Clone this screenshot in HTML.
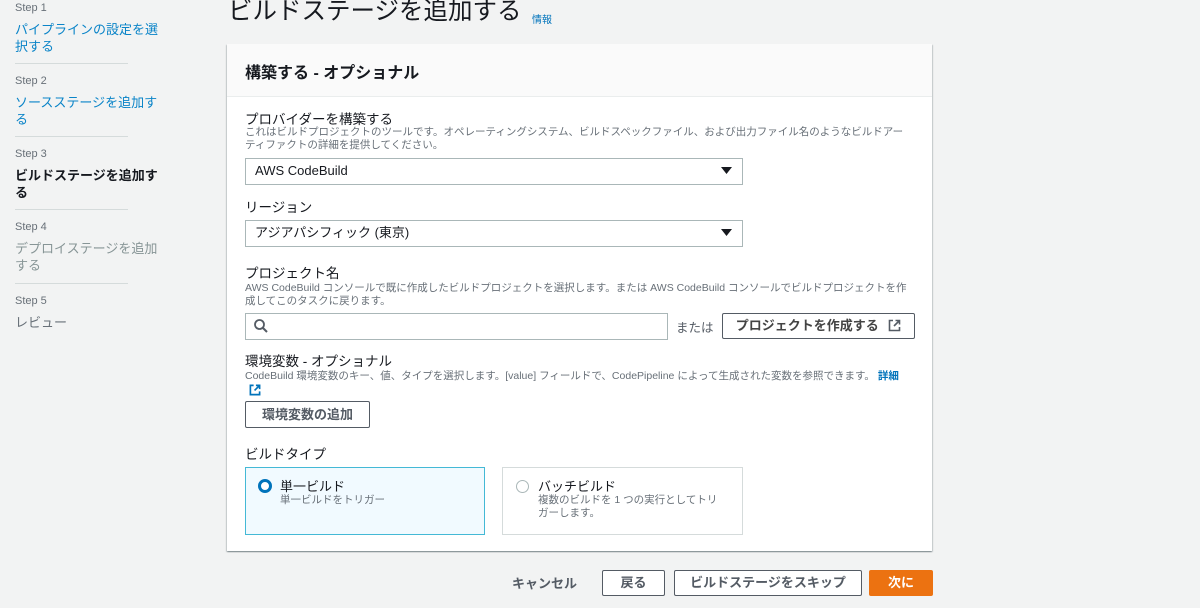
<!DOCTYPE html><html><head><meta charset="utf-8"><style>
body{margin:0;width:1200px;height:608px;background:#f2f3f3;font-family:"Liberation Sans","Noto Sans CJK JP",sans-serif;color:#16191f;position:relative;overflow:hidden}
.a{position:absolute;white-space:nowrap}
.step{font-size:11px;color:#687078}
.lnk{font-size:13px;color:#0a84c8;line-height:17px}
.dv{position:absolute;left:15px;width:113px;height:1px;background:#d5dbdb}
.lbl{font-size:13.5px;color:#16191f}
.desc{font-size:10.5px;color:#687078;line-height:13px}
.box{position:absolute;background:#fff;border:1px solid #aab7b8;box-sizing:border-box}
.btn{position:absolute;background:#fff;border:1px solid #545b64;box-sizing:border-box;border-radius:2px;font-weight:bold;font-size:13px;color:#545b64;text-align:center}
.sel{position:absolute;left:255px;font-size:13px;line-height:16px}
</style></head><body>
<div class="a step" style="left:15px;top:2px">Step 1</div>
<div class="a lnk" style="left:15px;top:21px">パイプラインの設定を選<br>択する</div>
<div class="dv" style="top:63px"></div>
<div class="a step" style="left:15px;top:75px">Step 2</div>
<div class="a lnk" style="left:15px;top:94px">ソースステージを追加す<br>る</div>
<div class="dv" style="top:136px"></div>
<div class="a step" style="left:15px;top:148px">Step 3</div>
<div class="a lnk" style="left:15px;top:167px;color:#16191f;font-weight:bold">ビルドステージを追加す<br>る</div>
<div class="dv" style="top:209px"></div>
<div class="a step" style="left:15px;top:221px">Step 4</div>
<div class="a lnk" style="left:15px;top:240px;color:#879596">デプロイステージを追加<br>する</div>
<div class="dv" style="top:283px"></div>
<div class="a step" style="left:15px;top:295px">Step 5</div>
<div class="a lnk" style="left:15px;top:314px;color:#687078">レビュー</div>

<div class="a" style="left:228px;top:-4px;font-size:24.5px;color:#16191f;line-height:32px">ビルドステージを追加する</div>
<div class="a" style="left:532px;top:11px;font-size:10px;color:#0073bb">情報</div>

<div style="position:absolute;left:227px;top:44px;width:705px;height:507px;background:#fff;box-shadow:0 1px 1px rgba(0,28,36,.3),1px 1px 1px rgba(0,28,36,.15),-1px 1px 1px rgba(0,28,36,.15)"></div>
<div style="position:absolute;left:227px;top:44px;width:705px;height:52px;background:#fafafa;border-bottom:1px solid #eaeded"></div>
<div class="a" style="left:245px;top:59px;font-size:16px;font-weight:bold">構築する - オプショナル</div>

<div class="a lbl" style="left:245px;top:108px">プロバイダーを構築する</div>
<div class="a desc" style="left:245px;top:126px">これはビルドプロジェクトのツールです。オペレーティングシステム、ビルドスペックファイル、および出力ファイル名のようなビルドアー<br>ティファクトの詳細を提供してください。</div>
<div class="box" style="left:245px;top:158px;width:498px;height:27px"></div>
<div class="sel" style="top:163px">AWS CodeBuild</div>
<svg class="a" style="left:721px;top:167px" width="11" height="8" viewBox="0 0 11 8"><path d="M0 0h11L5.5 7z" fill="#16191f"/></svg>

<div class="a lbl" style="left:245px;top:196px">リージョン</div>
<div class="box" style="left:245px;top:220px;width:498px;height:27px"></div>
<div class="sel" style="top:225px">アジアパシフィック (東京)</div>
<svg class="a" style="left:721px;top:229px" width="11" height="8" viewBox="0 0 11 8"><path d="M0 0h11L5.5 7z" fill="#16191f"/></svg>

<div class="a lbl" style="left:245px;top:262px">プロジェクト名</div>
<div class="a desc" style="left:245px;top:282px">AWS CodeBuild コンソールで既に作成したビルドプロジェクトを選択します。または AWS CodeBuild コンソールでビルドプロジェクトを作<br>成してこのタスクに戻ります。</div>
<div class="box" style="left:245px;top:313px;width:423px;height:27px"></div>
<svg class="a" style="left:253px;top:318px" width="16" height="16" viewBox="0 0 16 16"><circle cx="6.5" cy="6.5" r="4.5" fill="none" stroke="#545b64" stroke-width="1.8"/><path d="M10 10l4 4" stroke="#545b64" stroke-width="2"/></svg>
<div class="a" style="left:676px;top:317px;font-size:12.5px;color:#545b64">または</div>
<div class="btn" style="left:722px;top:313px;width:193px;height:26px;line-height:24px;color:#444">プロジェクトを作成する
<svg style="vertical-align:-2px;margin-left:6px" width="13" height="13" viewBox="0 0 13 13"><path d="M5 1.5H1.5v10h10V8M7.5 1.5h4v4M11.5 1.5L6 7" fill="none" stroke="#545b64" stroke-width="1.6"/></svg></div>

<div class="a lbl" style="left:245px;top:350px">環境変数 - オプショナル</div>
<div class="a desc" style="left:245px;top:370px">CodeBuild 環境変数のキー、値、タイプを選択します。[value] フィールドで、CodePipeline によって生成された変数を参照できます。 <span style="color:#0073bb;font-weight:bold">詳細</span></div>
<svg class="a" style="left:249px;top:384px" width="12" height="12" viewBox="0 0 13 13"><path d="M5 1.5H1.5v10h10V8M7.5 1.5h4v4M11.5 1.5L6 7" fill="none" stroke="#0073bb" stroke-width="1.8"/></svg>
<div class="btn" style="left:245px;top:401px;width:125px;height:27px;line-height:25px">環境変数の追加</div>

<div class="a lbl" style="left:245px;top:443px">ビルドタイプ</div>
<div style="position:absolute;left:245px;top:467px;width:240px;height:68px;box-sizing:border-box;background:#f1faff;border:1px solid #44b9d6"></div>
<div class="a" style="left:258px;top:479px;width:8px;height:8px;border:3.5px solid #0073bb;border-radius:50%;background:#fff"></div>
<div class="a" style="left:280px;top:476px;font-size:13px">単一ビルド</div>
<div class="a desc" style="left:280px;top:494px">単一ビルドをトリガー</div>
<div style="position:absolute;left:502px;top:467px;width:241px;height:68px;box-sizing:border-box;background:#fff;border:1px solid #d5dbdb"></div>
<div class="a" style="left:516px;top:480px;width:11px;height:11px;border:1px solid #aab7b8;border-radius:50%"></div>
<div class="a" style="left:538px;top:476px;font-size:13px">バッチビルド</div>
<div class="a desc" style="left:538px;top:494px">複数のビルドを 1 つの実行としてトリ<br>ガーします。</div>

<div class="a" style="left:512px;top:573px;font-size:13px;font-weight:bold;color:#545b64">キャンセル</div>
<div class="btn" style="left:602px;top:570px;width:63px;height:26px;line-height:24px">戻る</div>
<div class="btn" style="left:674px;top:570px;width:188px;height:26px;line-height:24px">ビルドステージをスキップ</div>
<div class="btn" style="left:869px;top:570px;width:64px;height:26px;line-height:24px;background:#ec7211;border-color:#ec7211;color:#fff">次に</div>
</body></html>
